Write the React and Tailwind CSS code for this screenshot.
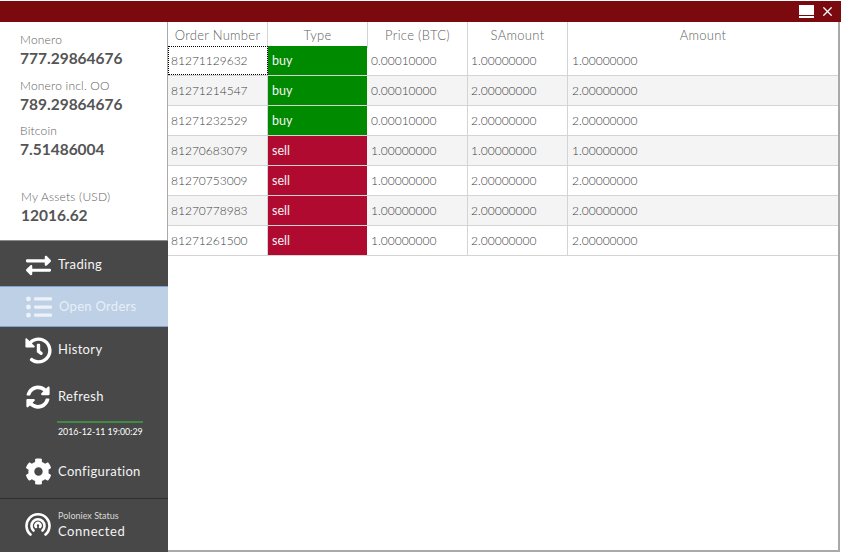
import { FaExchangeAlt, FaListUl, FaHistory, FaSyncAlt, FaCog } from "react-icons/fa";
import { X } from "lucide-react";

const orders = [
  { id: "81271129632", type: "buy", price: "0.00010000", sAmount: "1.00000000", amount: "1.00000000" },
  { id: "81271214547", type: "buy", price: "0.00010000", sAmount: "2.00000000", amount: "2.00000000" },
  { id: "81271232529", type: "buy", price: "0.00010000", sAmount: "2.00000000", amount: "2.00000000" },
  { id: "81270683079", type: "sell", price: "1.00000000", sAmount: "1.00000000", amount: "1.00000000" },
  { id: "81270753009", type: "sell", price: "1.00000000", sAmount: "2.00000000", amount: "2.00000000" },
  { id: "81270778983", type: "sell", price: "1.00000000", sAmount: "2.00000000", amount: "2.00000000" },
  { id: "81271261500", type: "sell", price: "1.00000000", sAmount: "2.00000000", amount: "2.00000000" },
];

const columns = "grid grid-cols-[100px_100px_100px_100px_1fr]";

function Balance({ label, value, className }) {
  return (
    <div className={className}>
      <p className="text-[12px] leading-[14px] font-light tracking-[0.2px] text-[#5f5f5f]">{label}</p>
      <p className="mt-px text-[15.5px] leading-[20px] font-bold text-[#555555]">{value}</p>
    </div>
  );
}

function NavItem({ icon, label, className }) {
  return (
    <div className={`flex items-center text-[13px] tracking-[0.35px] text-[#f4f4f4] ${className}`}>
      <div className="flex w-[58px] justify-center pl-[18px] text-white">{icon}</div>
      <span>{label}</span>
    </div>
  );
}

function App() {
  return (
    <div className="flex h-[552px] w-[841px] flex-col bg-white pt-px font-['Lato','Liberation_Sans',sans-serif]">
      <div className="flex h-[21px] items-center justify-end bg-[#7a0a0e] pr-[6px]">
        <div className="mr-[6px] flex h-[13px] w-[15px] items-end bg-white pb-[2px]">
          <div className="h-px w-full bg-[#7a0a0e]" />
        </div>
        <X size={15} strokeWidth={2} className="text-white" />
      </div>

      <div className="flex min-h-0 flex-1 pr-px">
        <aside className="flex w-[168px] shrink-0 flex-col">
          <div className="h-[218px] border-r border-[#a9a9a9] pl-[20px] pt-[11px]">
            <Balance label="Monero" value="777.29864676" />
            <Balance label="Monero incl. OO" value="789.29864676" className="mt-[11px]" />
            <Balance label="Bitcoin" value="7.51486004" className="mt-[10px]" />
            <Balance label="My Assets (USD)" value="12016.62" className="ml-px mt-[31px]" />
          </div>

          <nav className="flex flex-1 flex-col border-t border-[#8a8a8a] bg-[#484848]">
            <NavItem className="h-[45px] pt-[3px]" label="Trading" icon={<FaExchangeAlt size={25} />} />
            <div className="flex h-[41px] items-center border-y border-[#7fa3cc] bg-[#bdd0e6] text-[13px] tracking-[0.3px] text-[#e8eff7]">
              <div className="flex w-[59px] justify-center pl-[18px]">
                <FaListUl size={26} className="text-[#edf2f9]" />
              </div>
              <span>Open Orders</span>
            </div>
            <NavItem className="h-[44px] pt-[2px]" label="History" icon={<FaHistory size={27} />} />
            <NavItem className="mt-[2px] h-[46px] pt-[2px]" label="Refresh" icon={<FaSyncAlt size={24} />} />
            <div className="ml-[57px] mt-[2px] w-[86px]">
              <div className="h-[2px] bg-[#3f8a45]" />
              <p className="mt-[3px] whitespace-nowrap pl-px text-[8.8px] leading-[12px] text-white">2016-12-11 19:00:29</p>
            </div>
            <NavItem className="mt-[13px] h-[41px]" label="Configuration" icon={<FaCog size={27} />} />
            <div className="mt-[6px] flex flex-1 items-center border-t border-[#2f2f2f] pb-[2px]">
              <div className="flex w-[58px] justify-center pl-[18px]">
                <svg width="26" height="26" viewBox="0 0 26 26" fill="none" stroke="white" strokeWidth="2.6" strokeLinecap="round">
                  <path d="M5.5 22.5a11.5 11.5 0 1 1 15 0" />
                  <path d="M8.5 18.5a6.5 6.5 0 1 1 9 0" />
                  <path d="M11 15a2.5 2.5 0 1 1 4 0" />
                </svg>
              </div>
              <div className="text-[#f4f4f4]">
                <p className="text-[9px] leading-[12px] text-[#d8d8d8]">Poloniex Status</p>
                <p className="text-[13px] leading-[18px] tracking-[0.55px]">Connected</p>
              </div>
            </div>
          </nav>
        </aside>

        <main className="flex-1 border-r-2 border-b-2 border-[#a9a9a9] text-[12px] font-light text-[#3f3f3f]">
          <div className={`${columns} h-[24px] text-center text-[13px] leading-[26px] tracking-[0.3px] text-[#5f5f5f]`}>
            <div className="border-r border-[#d4d4d4]">Order Number</div>
            <div className="border-r border-[#d4d4d4]">Type</div>
            <div className="border-r border-[#d4d4d4]">Price (BTC)</div>
            <div className="border-r border-[#d4d4d4]">SAmount</div>
            <div>Amount</div>
          </div>

          {orders.map((order, index) => (
            <div
              key={order.id}
              className={`${columns} h-[30px] border-b border-[#d4d4d4] leading-[29px] ${index % 2 === 1 ? "bg-[#f4f4f4]" : "bg-white"}`}
            >
              <div className={`border-r border-[#d4d4d4] pl-[3px] ${index === 0 ? "outline-1 -outline-offset-1 outline-dotted outline-black" : ""}`}>
                {order.id}
              </div>
              <div className={`mr-px pl-[4px] text-[12.5px] font-normal text-[#f4f4f4] ${order.type === "buy" ? "bg-[#008a00]" : "bg-[#b00a30]"}`}>{order.type}</div>
              <div className="border-r border-[#d4d4d4] pl-[3px]">{order.price}</div>
              <div className="border-r border-[#d4d4d4] pl-[3px]">{order.sAmount}</div>
              <div className="pl-[4px]">{order.amount}</div>
            </div>
          ))}
        </main>
      </div>
    </div>
  );
}

export default App;
